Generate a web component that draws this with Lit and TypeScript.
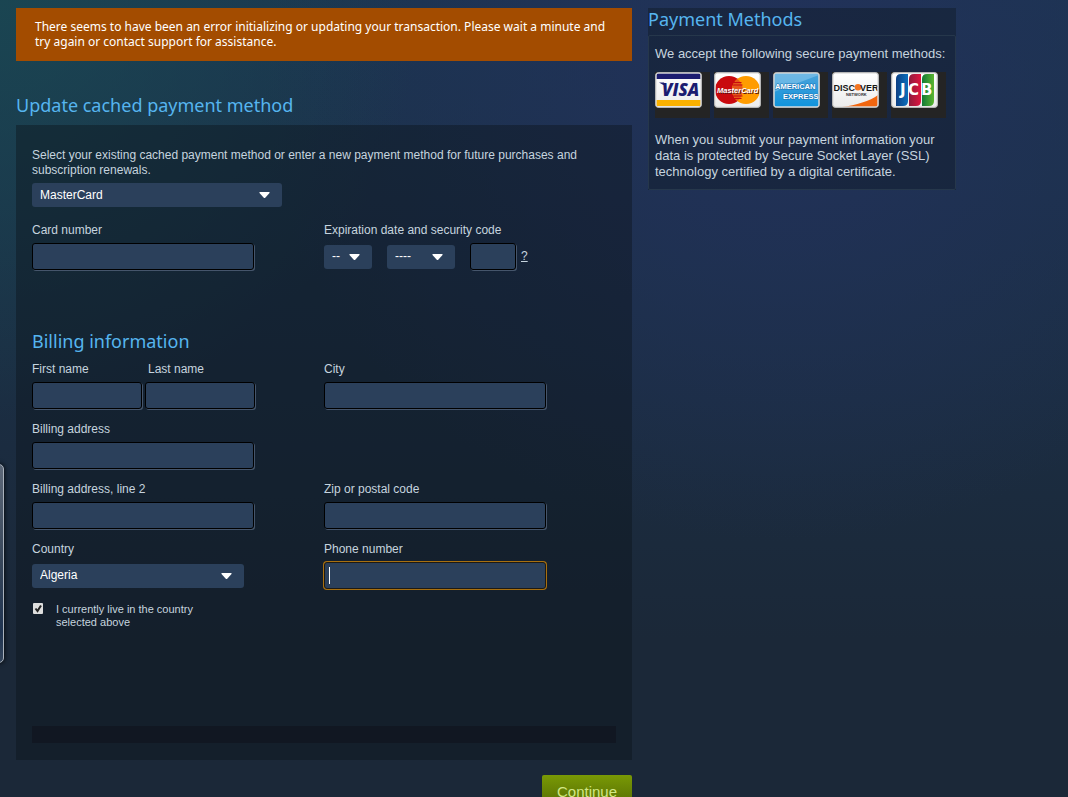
import { LitElement, html, css, svg } from "lit";
import { customElement } from "lit/decorators.js";

@customElement("card-logos")
export class CardLogos extends LitElement {
  static styles = css`
    :host { display: block; }
    .cards { display: flex; gap: 4px; margin: 0; padding: 0; list-style: none; }
    .card { width: 55px; height: 46px; background: #242424; }
    .logo { display: block; width: 48px; height: 37px; }
    .word { font-family: "Open Sans", "Noto Sans", sans-serif; font-weight: 800; }
    .sans { font-family: "Liberation Sans", Arial, sans-serif; font-weight: 700; }
    .wide { font-family: "DejaVu Sans", Verdana, sans-serif; font-weight: 700; }
  `;

  private frame(id: string, top: string, bottom: string, art: unknown) {
    return svg`
      <defs>
        <linearGradient id="bg-${id}" x1="0" y1="0" x2="0" y2="1">
          <stop offset="0" stop-color=${top} />
          <stop offset="1" stop-color=${bottom} />
        </linearGradient>
        <clipPath id="clip-${id}"><rect x="1.5" y="1.5" width="44" height="33" rx="2" /></clipPath>
      </defs>
      <rect x="0.5" y="0.5" width="46" height="35" rx="3" fill="#f4f4f4" stroke="#a5a5a5" />
      <g clip-path="url(#clip-${id})">
        <rect x="1" y="1" width="45" height="34" fill="url(#bg-${id})" />
        ${art}
      </g>
      <rect x="1" y="1" width="45" height="34" rx="2.5" fill="none" stroke="#cfcfcf" stroke-opacity=".8" />`;
  }

  private logo(id: string, name: string, art: unknown, top = "#ffffff", bottom = "#ececec") {
    return html`<li class="card">
      <svg class="logo" viewBox="0 0 48 37" role="img" aria-label=${name}>${this.frame(id, top, bottom, art)}</svg>
    </li>`;
  }

  render() {
    return html`<ul class="cards">
      ${this.logo("visa", "Visa", svg`
        <rect x="1" y="1" width="45" height="6" fill="#1c1c70" />
        <rect x="1" y="28" width="45" height="6" fill="#fbb100" />
        <path d="M4 10.500l5 0 2 4z" fill="#1c1c70" />
        <text class="word" x="7" y="24" font-size="17" font-style="italic" fill="#1c1c70">VISA</text>`)}
      ${this.logo("mc", "MasterCard", svg`
        <circle cx="15" cy="18" r="14" fill="#c9090e" />
        <circle cx="32" cy="18" r="14" fill="#ff9c00" />
        <path d="M23.500 7a14 14 0 0 0 0 22a14 14 0 0 0 0-22z" fill="#e4571b" />
        <path d="M19.500 10.500h8M18.500 13h10M18.500 24h10M19.500 26.500h8" stroke="#c9090e" />
        <text class="sans" x="4" y="22" font-size="7.500" font-style="italic" fill="#5b1212">MasterCard</text>
        <text class="sans" x="3" y="21" font-size="7.500" font-style="italic" fill="#ffffff">MasterCard</text>`)}
      ${this.logo("amex", "American Express", svg`
        <path d="M1 20L46 3V1H1z" fill="#a9daf5" opacity=".4" />
        <text class="sans" x="2" y="17" font-size="7.500" fill="#ffffff" stroke="#1a76b8" stroke-width="1" paint-order="stroke">AMERICAN</text>
        <text class="sans" x="10" y="27" font-size="7.500" fill="#ffffff" stroke="#1a76b8" stroke-width="1" paint-order="stroke">EXPRESS</text>`,
        "#4ba3da", "#0f93dc")}
      ${this.logo("disc", "Discover", svg`
        <path d="M10 35C24 33 38 29 46 23V35z" fill="#f2660f" />
        <text class="sans" x="1.500" y="18.500" font-size="9" fill="#161616">DISC</text>
        <circle cx="26" cy="15.300" r="3.300" fill="#f37521" />
        <text class="sans" x="28" y="18.500" font-size="9" fill="#161616">VER</text>
        <text class="sans" x="14" y="24" font-size="4" fill="#333333">NETWORK</text>`)}
      ${this.logo("jcb", "JCB", svg`
        <defs>
          <linearGradient id="jcb-b"><stop offset="0" stop-color="#0d3f83" /><stop offset="1" stop-color="#0a6fbd" /></linearGradient>
          <linearGradient id="jcb-r"><stop offset="0" stop-color="#8f1b3c" /><stop offset="1" stop-color="#e0143f" /></linearGradient>
          <linearGradient id="jcb-g"><stop offset="0" stop-color="#127a37" /><stop offset="1" stop-color="#5bb52f" /></linearGradient>
        </defs>
        <path d="M5 34V7q0-5 5-5h7v27q0 5-5 5z" fill="url(#jcb-b)" />
        <path d="M18 34V7q0-5 5-5h7v27q0 5-5 5z" fill="url(#jcb-r)" />
        <path d="M31 34V7q0-5 5-5h7v27q0 5-5 5z" fill="url(#jcb-g)" />
        <path d="M5 20v-2h3v2q0 1.500 2 1.500t2-1.500v-7h5v7q0 4-6 4t-6-4z" fill="#ffffff" opacity=".01" />
        <text class="wide" x="9" y="23" font-size="15" fill="#ffffff">J</text>
        <text class="wide" x="17" y="23" font-size="15" fill="#ffffff">C</text>
        <text class="wide" x="30" y="23" font-size="15" fill="#ffffff">B</text>`)}
    </ul>`;
  }
}

@customElement("app-root")
export class AppRoot extends LitElement {
  static styles = css`
    :host {
      display: block;
      position: relative;
      height: 100vh;
      box-sizing: border-box;
      overflow: hidden auto;
      scrollbar-width: none;
      padding: 8px 16px 32px;
      color: #c6d4df;
      font-family: "Liberation Sans", Arial, sans-serif;
      font-size: 12px;
      line-height: 15px;
      background:
        radial-gradient(circle at 0 0, rgba(26, 72, 82, .85), rgba(26, 72, 82, 0) 420px),
        radial-gradient(ellipse 520px 460px at 780px 80px, #22315a, rgba(34, 49, 90, 0)),
        linear-gradient(#1b3550, #1b2d42 400px, #1b2838 640px);
    }
    * { box-sizing: border-box; }
    .page { display: grid; grid-template-columns: 2fr 1fr; gap: 16px; max-width: 940px; align-items: start; }
    h1, h2, p { margin: 0; }
    .heading {
      font-family: "Noto Sans", "Open Sans", sans-serif;
      font-size: 18px;
      font-weight: 400;
      line-height: 24px;
      color: #56b5ef;
    }
    .error {
      padding: 11px 19px 12px;
      margin-bottom: 32px;
      background: #a34c00;
      color: #ffffff;
      font-family: "Noto Sans", "Open Sans", sans-serif;
      font-size: 12px;
    }
    .panel { margin-top: 8px; padding: 23px 16px 17px; background: rgba(12, 18, 26, .42); }
    .intro { display: block; }
    .fields { display: grid; grid-template-columns: 1fr 1fr; row-gap: 12px; }
    .payment { margin: 15px 0 59px; }
    .billing { margin-top: 8px; }
    .field { display: flex; flex-direction: column; gap: 5px; min-width: 0; }
    .left { grid-column: 1; }
    .label { line-height: 16px; }
    .control { display: flex; align-items: center; height: 27px; }
    .gaps { gap: 15px; }
    .help { display: flex; align-items: center; gap: 5px; }
    .pair { display: grid; grid-template-columns: 110px 110px; column-gap: 3px; }
    .inset { padding-left: 3px; }
    .text {
      width: 222px;
      max-width: 100%;
      height: 27px;
      margin: 0;
      padding: 0 5px;
      border: 1px solid #000000;
      border-radius: 3px;
      background: #2b405b;
      box-shadow: 1px 1px 0 #45556b;
      color: #ffffff;
      font: inherit;
      outline: none;
    }
    .code { width: 46px; }
    .text:focus { border-color: #1d1a14; box-shadow: 0 0 0 1px #a87010; caret-color: transparent; }
    .entry { position: relative; }
    .caret { position: absolute; left: 5px; top: 5px; width: 1px; height: 17px; background: #ffffff; }
    .select {
      appearance: none;
      display: block;
      width: 100%;
      height: 24px;
      margin: 0;
      padding: 0 0 0 8px;
      border: 0;
      border-radius: 3px;
      background: #2b405b;
      color: #ffffff;
      font: inherit;
      outline: none;
    }
    .pick { display: grid; align-items: center; }
    .pick > * { grid-area: 1 / 1; }
    .arrow { justify-self: end; margin-right: 12px; width: 11px; height: 6px; pointer-events: none; fill: #ffffff; }
    .method { width: 250px; margin-top: 5px; }
    .country { width: 212px; }
    .month { width: 48px; }
    .year { width: 68px; }
    .link { color: #c6d4df; text-decoration: underline; }
    .confirm { display: flex; gap: 12px; width: 184px; margin-top: 14px; font-size: 11px; line-height: 13px; }
    .check {
      appearance: none;
      width: 12px;
      height: 11px;
      margin: 0;
    }
    .tick { display: grid; flex: none; height: 11px; }
    .tick > * { grid-area: 1 / 1; }
    .mark { width: 12px; height: 11px; pointer-events: none; }
    .strip { height: 17px; margin-top: 97px; background: #111722; }
    .actions { display: flex; justify-content: flex-end; margin-top: 15px; }
    .continue {
      width: 90px;
      height: 34px;
      padding: 0;
      border: 0;
      border-radius: 2px;
      background: linear-gradient(#799905, #536904);
      color: #d2e885;
      font: 15px/34px "Liberation Sans", Arial, sans-serif;
    }
    .side { background: rgba(16, 26, 38, .45); font-size: 13px; line-height: 16px; }
    .title { height: 27px; line-height: 22px; }
    .box { padding: 10px 6px 9px; border: 1px solid #26374b; border-radius: 2px; }
    .logos { margin: 10px 0 14px; }
    .tab {
      position: absolute;
      left: -8px;
      top: 464px;
      width: 12px;
      height: 199px;
      border: 1px solid #a9b1bb;
      border-radius: 5px;
      background: linear-gradient(#5d6878, #37465a 50%, #1f3350 85%, #35455b);
      box-shadow: 0 0 5px #000000;
    }
  `;

  private arrow() {
    return html`<svg class="arrow" viewBox="0 0 11 6" aria-hidden="true"><path d="M0.500 0h10v1L6 6h-1L0.500 1z" /></svg>`;
  }

  firstUpdated() {
    this.renderRoot.querySelector<HTMLInputElement>("#phone")?.focus({ preventScroll: true });
  }

  private field(id: string, label: string, extra = "") {
    return html`<div class="field ${extra}">
      <label class="label" for=${id}>${label}</label>
      <input class="text" id=${id} type="text" autocomplete="off" />
    </div>`;
  }

  render() {
    return html`
      <div class="page">
        <main>
          <p class="error" role="alert">There seems to have been an error initializing or updating your transaction. Please wait a minute and try again or contact support for assistance.</p>
          <h1 class="heading">Update cached payment method</h1>
          <form>
            <div class="panel">
              <label class="intro" for="method">Select your existing cached payment method or enter a new payment method for future purchases and subscription renewals.</label>
              <div class="pick method">
                <select class="select" id="method"><option>MasterCard</option></select>${this.arrow()}
              </div>
              <div class="fields payment">
                ${this.field("card", "Card number")}
                <div class="field">
                  <label class="label" for="month">Expiration date and security code</label>
                  <div class="control gaps">
                    <div class="pick month"><select class="select" id="month"><option>--</option></select>${this.arrow()}</div>
                    <div class="pick year"><select class="select" aria-label="Expiration year"><option>----</option></select>${this.arrow()}</div>
                    <div class="help"><input class="text code" type="text" aria-label="Security code" /><a class="link" href="#help">?</a></div>
                  </div>
                </div>
              </div>
              <h2 class="heading">Billing information</h2>
              <div class="fields billing">
                <div class="pair">
                  ${this.field("first", "First name")}
                  <div class="field">
                    <label class="label inset" for="last">Last name</label>
                    <input class="text" id="last" type="text" />
                  </div>
                </div>
                ${this.field("city", "City")}
                ${this.field("address", "Billing address", "left")}
                ${this.field("address2", "Billing address, line 2", "left")}
                ${this.field("zip", "Zip or postal code")}
                <div class="field">
                  <label class="label" for="country">Country</label>
                  <div class="control">
                    <div class="pick country"><select class="select" id="country"><option>Algeria</option></select>${this.arrow()}</div>
                  </div>
                </div>
                <div class="field">
                  <label class="label" for="phone">Phone number</label>
                  <div class="entry"><input class="text" id="phone" type="tel" /><span class="caret"></span></div>
                </div>
              </div>
              <label class="confirm">
                <span class="tick">
                  <input class="check" type="checkbox" checked />
                  <svg class="mark" viewBox="0 0 12 11" aria-hidden="true">
                    <rect x="1" y="0" width="10" height="11" rx="1" fill="#dedede" />
                    <path d="M3.500 5.500L5.500 8L9 2.500" fill="none" stroke="#222222" stroke-width="2" />
                  </svg>
                </span>
                <span>I currently live in the country selected above</span>
              </label>
              <div class="strip"></div>
            </div>
            <div class="actions"><button class="continue" type="button">Continue</button></div>
          </form>
        </main>
        <aside class="side">
          <h2 class="heading title">Payment Methods</h2>
          <div class="box">
            <p>We accept the following secure payment methods:</p>
            <card-logos class="logos"></card-logos>
            <p>When you submit your payment information your data is protected by Secure Socket Layer (SSL) technology certified by a digital certificate.</p>
          </div>
        </aside>
      </div>
      <div class="tab"></div>
    `;
  }
}
